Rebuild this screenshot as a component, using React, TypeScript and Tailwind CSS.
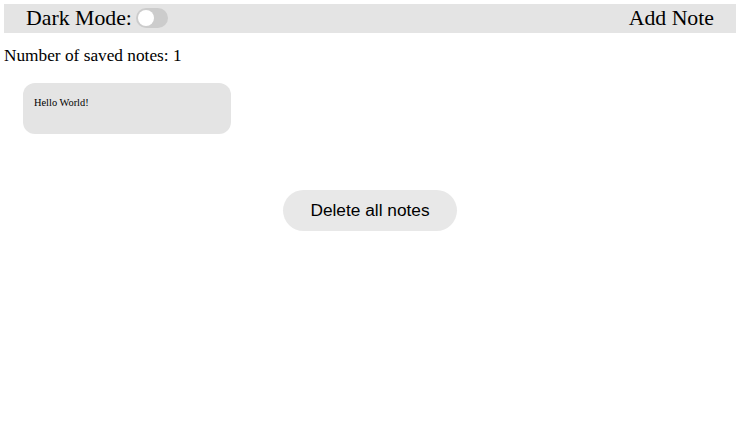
import React from 'react';

const App = () => {
  return (
    <div className="min-h-[434px] bg-white p-1 font-['Liberation_Serif',serif] text-black">
      {/* Header */}
      <div className="flex h-[29px] items-center justify-between bg-[#e4e4e4] pl-[22px] pr-[22px]">
        <div className="flex items-center text-[21.8px] leading-none">
          <span>Dark Mode:</span>
          <span className="relative ml-[4px] inline-block h-[20px] w-[32px] rounded-full bg-[#cccccc]">
            <span className="absolute left-[2px] top-[2px] h-[16px] w-[16px] rounded-full bg-white" />
          </span>
        </div>
        <div className="text-[21.8px] leading-none">Add Note</div>
      </div>

      <p className="mt-[11px] text-[17.3px] leading-[24px]">Number of saved notes: 1</p>

      {/* Notes */}
      <div className="mt-[15px] flex pl-[19px]">
        <div className="h-[51px] w-[208px] rounded-[12px] bg-[#e4e4e4] px-[11px] pt-[13px] text-[10.4px] leading-[14px]">
          Hello World!
        </div>
      </div>

      <div className="mt-[56px] flex justify-center">
        <button className="h-[41px] w-[174px] rounded-full bg-[#e8e8e8] font-['Liberation_Sans',sans-serif] text-[17.3px]">
          Delete all notes
        </button>
      </div>
    </div>
  );
};

export default App;
